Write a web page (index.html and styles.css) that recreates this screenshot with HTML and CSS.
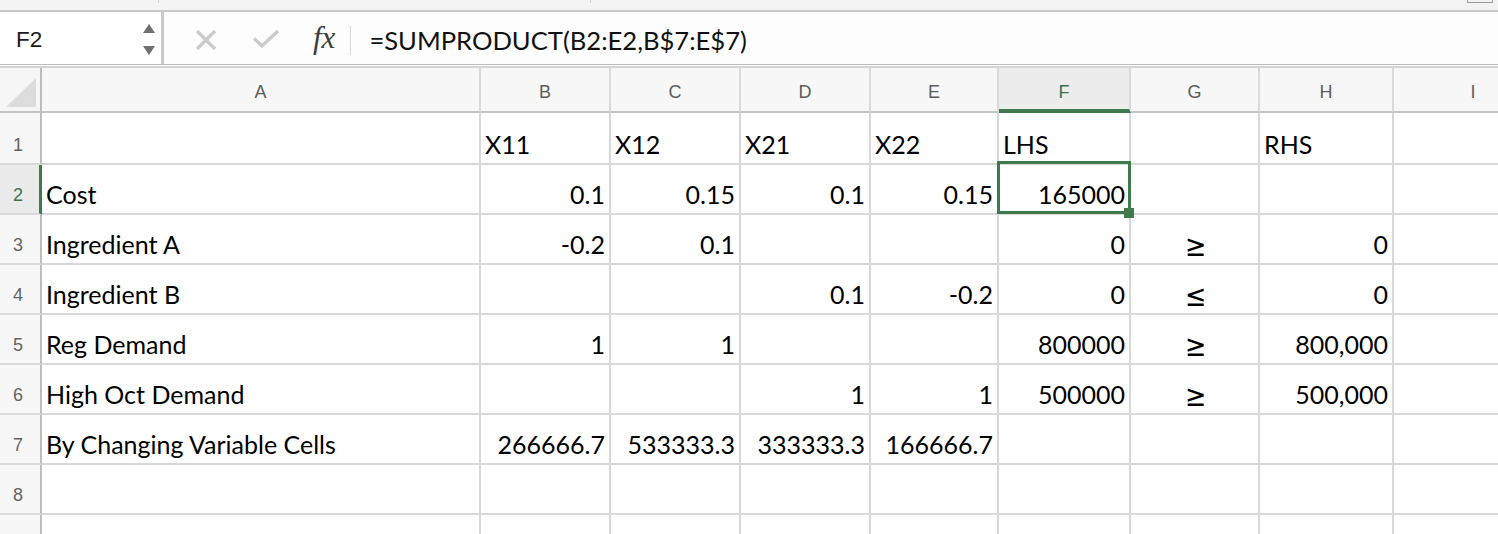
FILE: index.html
```html
<!DOCTYPE html>
<html>
<head>
<meta charset="utf-8">
<link rel="stylesheet" href="styles.css">
</head>
<body>
<div class="app">
  <div class="topstrip">
    <span class="tsep s1"></span>
    <span class="tsep s2"></span>
    <span class="tbox"></span>
  </div>
  <div class="fbar">
    <div class="namebox">
      <span class="ref">F2</span>
      <div class="spin">
        <svg width="14" height="34" viewBox="0 0 14 34"><polygon points="1,10 7,1 13,10" fill="#6f6f6f"/><polygon points="1,23 13,23 7,32" fill="#6f6f6f"/></svg>
      </div>
    </div>
    <div class="btns">
      <svg class="ico-x" width="22" height="22" viewBox="0 0 22 22"><path d="M2 2 L20 20 M20 2 L2 20" stroke="#cbcbcb" stroke-width="3.2" fill="none"/></svg>
      <svg class="ico-ok" width="28" height="20" viewBox="0 0 28 20"><path d="M2 9.5 L10 17 L26 2" stroke="#cbcbcb" stroke-width="3.4" fill="none"/></svg>
      <span class="fx">fx</span>
      <span class="vsep"></span>
    </div>
    <div class="formula">=SUMPRODUCT(B2:E2,B$7:E$7)</div>
  </div>
  <div class="sheet">
    <div class="corner"><svg width="42" height="45" viewBox="0 0 42 45"><polygon points="6,39 36,10 36,39" fill="#dcdcdc"/></svg></div>
    <div class="ch">A</div><div class="ch">B</div><div class="ch">C</div><div class="ch">D</div><div class="ch">E</div><div class="ch sel">F</div><div class="ch">G</div><div class="ch">H</div><div class="ch">I</div>

    <div class="rh">1</div>
    <div class="c"></div><div class="c">X11</div><div class="c">X12</div><div class="c">X21</div><div class="c">X22</div><div class="c">LHS</div><div class="c"></div><div class="c">RHS</div><div class="c"></div>

    <div class="rh sel">2</div>
    <div class="c">Cost</div><div class="c n">0.1</div><div class="c n">0.15</div><div class="c n">0.1</div><div class="c n">0.15</div><div class="c n active">165000<span class="handle"></span></div><div class="c"></div><div class="c"></div><div class="c"></div>

    <div class="rh">3</div>
    <div class="c">Ingredient A</div><div class="c n">-0.2</div><div class="c n">0.1</div><div class="c"></div><div class="c"></div><div class="c n">0</div><div class="c m"><span class="sym">≥</span></div><div class="c n">0</div><div class="c"></div>

    <div class="rh">4</div>
    <div class="c">Ingredient B</div><div class="c"></div><div class="c"></div><div class="c n">0.1</div><div class="c n">-0.2</div><div class="c n">0</div><div class="c m"><span class="sym">≤</span></div><div class="c n">0</div><div class="c"></div>

    <div class="rh">5</div>
    <div class="c">Reg Demand</div><div class="c n">1</div><div class="c n">1</div><div class="c"></div><div class="c"></div><div class="c n">800000</div><div class="c m"><span class="sym">≥</span></div><div class="c n">800,000</div><div class="c"></div>

    <div class="rh">6</div>
    <div class="c">High Oct Demand</div><div class="c"></div><div class="c"></div><div class="c n">1</div><div class="c n">1</div><div class="c n">500000</div><div class="c m"><span class="sym">≥</span></div><div class="c n">500,000</div><div class="c"></div>

    <div class="rh">7</div>
    <div class="c">By Changing Variable Cells</div><div class="c n">266666.7</div><div class="c n">533333.3</div><div class="c n">333333.3</div><div class="c n">166666.7</div><div class="c"></div><div class="c"></div><div class="c"></div><div class="c"></div>

    <div class="rh">8</div>
    <div class="c"></div><div class="c"></div><div class="c"></div><div class="c"></div><div class="c"></div><div class="c"></div><div class="c"></div><div class="c"></div><div class="c"></div>

    <div class="rh"></div>
    <div class="c"></div><div class="c"></div><div class="c"></div><div class="c"></div><div class="c"></div><div class="c"></div><div class="c"></div><div class="c"></div><div class="c"></div>
  </div>
</div>
</body>
</html>
```

FILE: styles.css
```css
html, body {
  margin: 0;
  padding: 0;
  background: #ffffff;
  overflow: hidden;
}
.app {
  width: 1498px;
  height: 534px;
  overflow: hidden;
  font-family: "Lato", "Liberation Sans", sans-serif;
}
.topstrip {
  height: 10px;
  background: #f3f3f3;
  border-bottom: 2px solid #c9c9c9;
  position: relative;
}
.tsep {
  position: absolute;
  top: 0;
  width: 1px;
  height: 3px;
  background: #d2d2d2;
}
.s1 { left: 158px; }
.s2 { left: 590px; }
.tbox {
  position: absolute;
  right: 5px;
  top: -1px;
  width: 24px;
  height: 3px;
  border: 1px solid #9a9a9a;
  border-top: none;
}
.fbar {
  height: 52px;
  display: flex;
  align-items: center;
  background: #fdfdfd;
  border-bottom: 1px solid #bdbdbd;
}
.namebox {
  width: 164px;
  height: 52px;
  box-sizing: border-box;
  border-right: 3px solid #c9c9c9;
  display: flex;
  align-items: center;
  background: #ffffff;
}
.ref {
  font-family: "Liberation Sans", Arial, sans-serif;
  font-size: 22.5px;
  color: #1a1a1a;
  padding-left: 16px;
  width: 126px;
  padding-top: 3px;
}
.spin {
  width: 14px;
  height: 34px;
  margin-top: 4px;
}
.spin svg { display: block; }
.btns {
  display: flex;
  align-items: center;
  height: 52px;
}
.ico-x { margin-left: 31px; margin-top: 4px; }
.ico-ok { margin-left: 35px; margin-top: 2px; }
.fx {
  font-family: "Liberation Serif", "DejaVu Serif", serif;
  font-style: italic;
  font-size: 31px;
  color: #3c3c3c;
  margin-left: 33px;
  letter-spacing: 0px;
}
.vsep {
  width: 1px;
  height: 29px;
  background: #d8d8d8;
  margin-left: 15px;
  margin-top: 4px;
}
.formula {
  margin-left: 18px;
  font-size: 25.6px;
  color: #111;
  padding-top: 4px;
}
.sheet {
  margin-top: 1px;
  border-top: 2px solid #d4d4d4;
  display: grid;
  grid-template-columns: 42px 439px 130px 130px 130px 128px 132px 129px 134px 160px;
  grid-template-rows: 45px 52px 50px 50px 50px 50px 50px 50px 50px 50px;
}
.corner {
  background: #f6f6f6;
  border-right: 2px solid #bcbcbc;
  border-bottom: 2px solid #c4c4c4;
  box-sizing: border-box;
}
.corner svg { display: block; }
.ch {
  background: #f7f7f7;
  border-right: 2px solid #dadada;
  border-bottom: 2px solid #c4c4c4;
  box-sizing: border-box;
  display: flex;
  align-items: center;
  justify-content: center;
  font-family: "Liberation Sans", Arial, sans-serif;
  font-size: 18px;
  color: #5c5c5c;
  padding-top: 6px;
}
.ch.sel {
  background: #ececec;
  color: #3a7247;
  border-bottom: 4px solid #3f7a4c;
  padding-top: 8px;
}
.rh {
  background: #f7f7f7;
  border-right: 2px solid #bcbcbc;
  border-bottom: 2px solid #dadada;
  box-sizing: border-box;
  display: flex;
  align-items: flex-end;
  justify-content: center;
  padding-right: 4px;
  padding-bottom: 7px;
  font-family: "Liberation Sans", Arial, sans-serif;
  font-size: 18px;
  color: #646464;
}
.rh.sel {
  background: #eaeaea;
  color: #3a7247;
  border-right: 3px solid #3f7a4c;
  padding-right: 3px;
}
.c {
  border-right: 2px solid #d8d8d8;
  border-bottom: 2px solid #d8d8d8;
  box-sizing: border-box;
  display: flex;
  align-items: flex-end;
  padding: 0 4px 5px 4px;
  font-size: 25px;
  line-height: 28px;
  color: #000;
  white-space: nowrap;
  overflow: visible;
}
.c.n { justify-content: flex-end; }
.c.m {
  justify-content: center;
  padding-left: 6px;
}
.sym {
  font-family: "DejaVu Sans", sans-serif;
  font-size: 30px;
  line-height: 28px;
  display: inline-block;
  transform: scaleX(0.85);
  position: relative;
  top: 2px;
}
.c.active { position: relative; }
.c.active::after {
  content: "";
  position: absolute;
  left: -2px;
  right: -2px;
  top: -4px;
  bottom: -1px;
  border: 3px solid #3f7a4c;
  pointer-events: none;
}
.handle {
  position: absolute;
  right: -5px;
  bottom: -5px;
  width: 10px;
  height: 10px;
  background: #3f7a4c;
  z-index: 2;
}
```
